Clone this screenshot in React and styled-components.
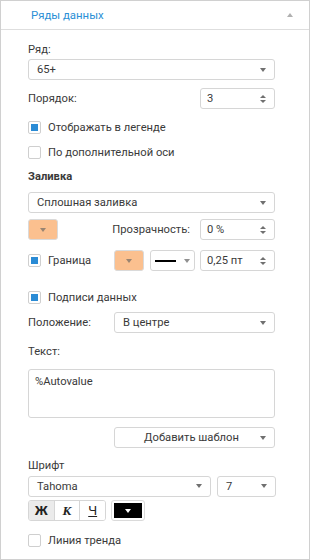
import React from 'react';
import styled, { createGlobalStyle, css } from 'styled-components';

const GlobalStyle = createGlobalStyle`
  html, body {
    margin: 0;
    padding: 0;
    background: #ffffff;
  }
  body {
    font-family: Roboto, "Liberation Sans", Arial, sans-serif;
    font-size: 11.2px;
    color: #3a3a3a;
  }
`;

const Panel = styled.div`
  box-sizing: border-box;
  width: 310px;
  height: 560px;
  border: 1px solid #d0d0d0;
  background: #ffffff;
`;

const Header = styled.div`
  height: 28px;
  border-bottom: 1px solid #dedede;
  display: flex;
  align-items: center;
  justify-content: space-between;
  padding: 0 16px 0 30px;
`;

const Title = styled.span`
  color: #2b8fd6;
  font-size: 11.4px;
`;

const CollapseArrow = styled.span`
  width: 0;
  height: 0;
  border-left: 3px solid transparent;
  border-right: 3px solid transparent;
  border-bottom: 4px solid #b0b0b0;
`;

const Content = styled.div`
  padding: 0 34px 0 27px;
  display: flex;
  flex-direction: column;
`;

const Row = styled.div`
  display: flex;
  align-items: center;
  height: ${(p) => p.h || 20}px;
  margin-top: ${(p) => p.mt || 0}px;
  gap: ${(p) => p.gap || 0}px;
`;

const Label = styled.span`
  color: #3a3a3a;
  font-weight: ${(p) => (p.bold ? 700 : 400)};
  width: ${(p) => (p.w ? `${p.w}px` : 'auto')};
  flex: ${(p) => (p.grow ? 1 : 'none')};
  text-align: ${(p) => p.align || 'left'};
  white-space: nowrap;
`;

const boxBase = css`
  box-sizing: border-box;
  height: ${(p) => p.h || 21}px;
  border: 1px solid #d6d6d6;
  border-radius: 3px;
  background: #ffffff;
  display: flex;
  align-items: center;
`;

const Select = styled.div`
  ${boxBase};
  width: ${(p) => (p.w ? `${p.w}px` : '100%')};
  flex: none;
  padding: 0 8px 0 ${(p) => p.pl || 8}px;
`;

const SelectText = styled.span`
  flex: 1;
  text-align: ${(p) => (p.center ? 'center' : 'left')};
  white-space: nowrap;
  color: #3a3a3a;
`;

const Caret = styled.span`
  width: 0;
  height: 0;
  flex: none;
  border-left: 3.5px solid transparent;
  border-right: 3.5px solid transparent;
  border-top: 4px solid ${(p) => p.color || '#707070'};
`;

const Spin = styled.div`
  ${boxBase};
  width: 75px;
  flex: none;
  margin-left: auto;
  padding: 0 8px 0 6px;
`;

const SpinArrows = styled.span`
  display: flex;
  flex-direction: column;
  gap: 2px;
  flex: none;
`;

const UpTri = styled.span`
  width: 0;
  height: 0;
  border-left: 3px solid transparent;
  border-right: 3px solid transparent;
  border-bottom: 3px solid #707070;
`;

const DownTri = styled.span`
  width: 0;
  height: 0;
  border-left: 3px solid transparent;
  border-right: 3px solid transparent;
  border-top: 3px solid #707070;
`;

const CheckBox = styled.span`
  box-sizing: border-box;
  width: 13px;
  height: 13px;
  flex: none;
  border: 1px solid #cfcfcf;
  border-radius: 2px;
  background: #ffffff;
  display: flex;
  align-items: center;
  justify-content: center;
  margin-right: 7px;

  &::after {
    content: '';
    width: 7px;
    height: 7px;
    background: ${(p) => (p.checked ? '#2a8bd5' : 'transparent')};
  }
`;

const ColorButton = styled.div`
  ${boxBase};
  width: ${(p) => p.w || 30}px;
  flex: none;
  justify-content: center;
  background: ${(p) => p.fill};
  border-color: #dadada;
  ${(p) =>
    p.inset &&
    css`
      background: #ffffff;
      padding: 2px;
    `}
`;

const ColorFill = styled.div`
  flex: 1;
  align-self: stretch;
  background: ${(p) => p.fill};
  display: flex;
  align-items: center;
  justify-content: center;
`;

const LineStyle = styled.div`
  ${boxBase};
  width: 45px;
  flex: none;
  margin-left: 6px;
  padding: 0 8px 0 4px;
  gap: 8px;
`;

const LineSample = styled.span`
  width: 21px;
  height: 2px;
  background: #000000;
  flex: none;
`;

const TextArea = styled.div`
  ${boxBase};
  height: 49px;
  align-items: flex-start;
  padding: 5px 6px;
  margin-top: 8px;
`;

const ButtonGroup = styled.div`
  display: flex;
  box-sizing: border-box;
  height: 21px;
  border: 1px solid #d6d6d6;
  border-radius: 3px;
  overflow: hidden;
  width: 78px;
  flex: none;
`;

const StyleButton = styled.div`
  flex: 1;
  display: flex;
  align-items: center;
  justify-content: center;
  background: ${(p) => (p.active ? '#ebebeb' : '#ffffff')};
  border-left: ${(p) => (p.first ? 'none' : '1px solid #d6d6d6')};
  color: #222222;
  font-size: 13px;
  font-weight: ${(p) => (p.bold ? 700 : 400)};
  font-style: ${(p) => (p.italic ? 'italic' : 'normal')};
  font-family: ${(p) => (p.serif ? '"Liberation Serif", serif' : 'inherit')};
  text-decoration: ${(p) => (p.underline ? 'underline' : 'none')};
`;

const Right = styled.div`
  display: flex;
  justify-content: flex-end;
  margin-top: ${(p) => p.mt || 0}px;
`;

const Spinner = ({ value }) => (
  <Spin>
    <SelectText>{value}</SelectText>
    <SpinArrows>
      <UpTri />
      <DownTri />
    </SpinArrows>
  </Spin>
);

const Dropdown = ({ value, w, center }) => (
  <Select w={w}>
    <SelectText center={center}>{value}</SelectText>
    <Caret />
  </Select>
);

const App = () => (
  <>
    <GlobalStyle />
    <Panel>
      <Header>
        <Title>Ряды данных</Title>
        <CollapseArrow />
      </Header>
      <Content>
        <Row mt={9}>
          <Label>Ряд:</Label>
        </Row>
        <Dropdown value="65+" />

        <Row mt={8} h={21}>
          <Label>Порядок:</Label>
          <Spinner value="3" />
        </Row>

        <Row mt={8}>
          <CheckBox checked />
          <Label>Отображать в легенде</Label>
        </Row>
        <Row mt={5}>
          <CheckBox />
          <Label>По дополнительной оси</Label>
        </Row>

        <Row mt={4}>
          <Label bold>Заливка</Label>
        </Row>
        <Row mt={6} h={21}>
          <Dropdown value="Сплошная заливка" />
        </Row>

        <Row mt={6} h={21}>
          <ColorButton fill="#fbc08f">
            <Caret color="#9a8471" />
          </ColorButton>
          <Label grow align="right" style={{ paddingRight: 10 }}>
            Прозрачность:
          </Label>
          <Spinner value="0 %" />
        </Row>

        <Row mt={10} h={21}>
          <CheckBox checked />
          <Label w={66}>Граница</Label>
          <ColorButton fill="#fbc08f">
            <Caret color="#9a8471" />
          </ColorButton>
          <LineStyle>
            <LineSample />
            <Caret color="#909090" />
          </LineStyle>
          <Spinner value="0,25 пт" />
        </Row>

        <Row mt={16}>
          <CheckBox checked />
          <Label>Подписи данных</Label>
        </Row>
        <Row mt={5} h={21}>
          <Label grow>Положение:</Label>
          <Dropdown value="В центре" w={161} />
        </Row>

        <Row mt={8}>
          <Label>Текст:</Label>
        </Row>
        <TextArea>%Autovalue</TextArea>

        <Right mt={9}>
          <Select w={161}>
            <SelectText center>Добавить шаблон</SelectText>
            <Caret />
          </Select>
        </Right>

        <Row mt={7}>
          <Label>Шрифт</Label>
        </Row>
        <Row mt={1} gap={6}>
          <Dropdown value="Tahoma" w={183} />
          <Dropdown value="7" w={59} />
        </Row>

        <Row mt={4} h={21} gap={5}>
          <ButtonGroup>
            <StyleButton first active bold>Ж</StyleButton>
            <StyleButton italic bold serif>К</StyleButton>
            <StyleButton underline>Ч</StyleButton>
          </ButtonGroup>
          <ColorButton w={34} inset>
            <ColorFill fill="#000000">
              <Caret color="#ffffff" />
            </ColorFill>
          </ColorButton>
        </Row>

        <Row mt={9}>
          <CheckBox />
          <Label>Линия тренда</Label>
        </Row>
      </Content>
    </Panel>
  </>
);

export default App;
